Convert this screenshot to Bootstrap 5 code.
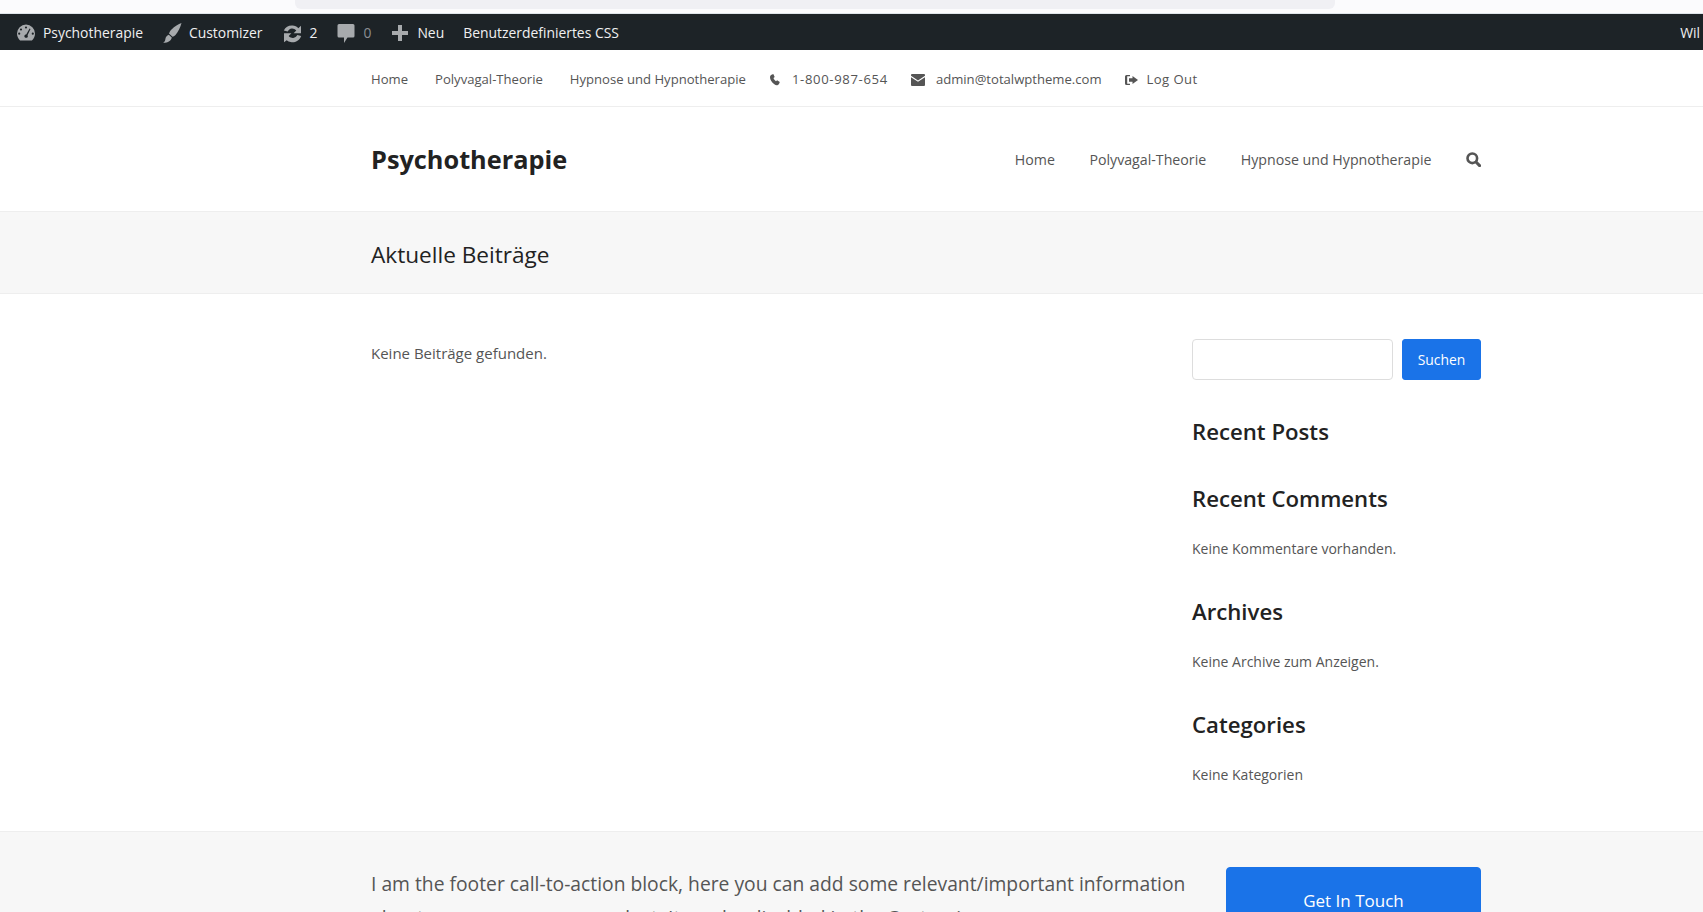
<!DOCTYPE html>
<html lang="de">
<head>
  <meta charset="UTF-8">
  <meta name="viewport" content="width=device-width, initial-scale=1">
  <title>Psychotherapie</title>
  <link href="https://cdn.jsdelivr.net/npm/bootstrap@5.3.3/dist/css/bootstrap.min.css" rel="stylesheet">
  <style>
    body {
      font-family: "Open Sans", "Noto Sans", sans-serif;
      color: #555;
      font-size: 15px;
      overflow: hidden;
      height: 912px;
    }
    a { color: inherit; text-decoration: none; }

    .browser-strip { height: 14px; background: #fbfbfd; border-bottom: 1px solid #dfe5ea; }
    .browser-tab { width: 1040px; height: 9px; margin-left: 295px; background: #f0f0f4; border-radius: 0 0 6px 6px; }

    .wp-bar { height: 36px; background: #1d2327; color: #f0f0f1; font-size: 13.9px; white-space: nowrap; padding-top: 2px; }
    .wp-bar svg { fill: #a7aaad; display: block; }
    .wp-item { display: flex; align-items: center; gap: 7px; margin-left: 19px; }
    .wp-item:first-child { margin-left: 16px; }
    .wp-zero { color: #8c8f94; }
    .wp-user { margin-right: 3px; }

    .top-nav { height: 57px; border-bottom: 1px solid #eee; font-size: 13.1px; padding-top: 4px; }
    .site-box { width: 1110px; margin-left: 371px; }
    .top-nav svg { fill: #555; display: block; }
    .top-link { margin-left: 27px; }
    .top-info { display: flex; align-items: center; gap: 11px; margin-left: 23px; }
    .top-phone { letter-spacing: .65px; }
    .top-logout { letter-spacing: .4px; gap: 9px; }

    .site-head { height: 105px; border-bottom: 1px solid #eee; padding-top: 2px; }
    .site-name { font-size: 25.3px; font-weight: 700; color: #222; }
    .main-menu { font-size: 14.2px; gap: 34.5px; }

    .page-head { height: 82px; background: #f7f7f7; border-bottom: 1px solid #eee; padding-top: 5px; }
    .page-head h1 { font-size: 22.6px; font-weight: 400; color: #222; margin: 0; }

    .page-body { height: 537px; padding-top: 45px; }
    .side-col { width: 289px; }
    .side-col h4 { font-size: 22.2px; line-height: 32px; font-weight: 600; color: #222; margin: 36px 0 0; }
    .side-col h4.side-tight { margin-top: 35px; }
    .side-form { gap: 9px; }
    .side-search { height: 41px; border-radius: 4px; border: 1px solid #ddd; }
    .btn-suchen { background: #1a73e8; border-color: #1a73e8; color: #fff; height: 41px; font-size: 13.9px; width: 79px; padding: 2px 0 0; border-radius: 3px; }
    .side-text { font-size: 14px; line-height: 22px; margin-top: 23px; }
    .main-text { font-size: 15px; margin-top: 3px; }

    .foot-cta { background: #f7f7f7; border-top: 1px solid #eee; padding-top: 35px; height: 200px; }
    .foot-cta p { font-size: 19.3px; line-height: 34px; margin: 0; width: 840px; }
    .btn-touch { background: #1a73e8; border-color: #1a73e8; color: #fff; width: 255px; height: 68px; font-size: 17px; border-radius: 4px; }
  </style>
</head>
<body>

<div class="browser-strip"><div class="browser-tab"></div></div>

<!-- admin bar -->
<div class="wp-bar d-flex align-items-center justify-content-between">
  <div class="d-flex align-items-center">
    <span class="wp-item">
      <svg width="20" height="20" viewBox="0 0 20 20"><path d="M10 1.500a9 9 0 0 0-9 9c0 2.700 1.200 5.200 3.100 6.900h11.800A9 9 0 0 0 19 10.500a9 9 0 0 0-9-9zM10 3.400a1.100 1.100 0 1 1 0 2.200 1.100 1.100 0 0 1 0-2.200zM5 5.400a1.100 1.100 0 1 1 0 2.200 1.100 1.100 0 0 1 0-2.200zM3.200 9.600a1.100 1.100 0 1 1 0 2.200 1.100 1.100 0 0 1 0-2.200zM16.800 9.600a1.100 1.100 0 1 1 0 2.200 1.100 1.100 0 0 1 0-2.200zM13.600 5.500l.9.500-3 6.300c.5.600.5 1.500-.1 2.100-.7.700-2 .6-2.700-.2-.6-.8-.4-2 .5-2.500.3-.2.7-.3 1-.2z" fill-rule="evenodd"/></svg>
      Psychotherapie
    </span>
    <span class="wp-item">
      <svg width="20" height="22" viewBox="0 0 20 22"><path d="M19.500 1c-1 4-3.500 9-6 12-1 1-2 1.500-3 1.800L7 11.500c.5-1.500 1.500-3 2.500-4C12.500 4.500 16.500 2 19.500 1zM6.800 12.700l3 2.900c-.4 3-3.500 5.400-8.800 5.400 1.700-1.200 2-2.300 2.300-3.600.3-2.200 1.500-4.200 3.500-4.700z"/></svg>
      Customizer
    </span>
    <span class="wp-item">
      <svg width="21" height="20" viewBox="0 0 21 20"><path d="M10.500 2.500c2.300 0 4.400 1 5.800 2.700L19 2.800v7.400h-7.400l2.700-2.700a5 5 0 0 0-8.600.9L1.800 7.500A9.200 9.200 0 0 1 10.500 2.500zM2 10.300h7.400l-2.700 2.700a5 5 0 0 0 8.600-.9l3.900.9a9.200 9.200 0 0 1-14.500 4.200L2 19.200z"/></svg>
      2
    </span>
    <span class="wp-item">
      <svg width="20" height="22" viewBox="0 0 20 22"><path d="M3 2h14a1.500 1.500 0 0 1 1.500 1.500v10.500a1.500 1.500 0 0 1-1.500 1.500h-5.500L8 21v-5.500H3A1.500 1.500 0 0 1 1.500 14V3.500A1.500 1.500 0 0 1 3 2z"/></svg>
      <span class="wp-zero">0</span>
    </span>
    <span class="wp-item">
      <svg width="20" height="20" viewBox="0 0 20 20"><path d="M8 2h4v6h6v4h-6v6H8v-6H2V8h6z"/></svg>
      Neu
    </span>
    <span class="wp-item">Benutzerdefiniertes CSS</span>
  </div>
  <span class="wp-user">Wil</span>
</div>

<!-- top menu -->
<div class="top-nav d-flex align-items-center">
  <div class="site-box d-flex align-items-center">
    <a href="#">Home</a>
    <a href="#" class="top-link">Polyvagal-Theorie</a>
    <a href="#" class="top-link">Hypnose und Hypnotherapie</a>
    <span class="top-info top-phone">
      <svg width="12" height="12" viewBox="0 0 12 12"><path d="M2.500.7 4.300 0l1.400 3-1.200 1c.3 1.200 1.300 2.500 2.500 3.200l1.100-1 2.700 1.800-.7 1.700C9 11.500 7.300 11.800 5 10 2.600 8.200 1 5.500 1 3.200c0-1 .5-1.900 1.500-2.500z"/></svg>
      1-800-987-654
    </span>
    <span class="top-info">
      <svg width="14" height="12" viewBox="0 0 14 12"><path d="M1 0h12a1 1 0 0 1 1 1v.8L7 6.400 0 1.800V1a1 1 0 0 1 1-1zM0 3.300l7 4.500 7-4.500V11a1 1 0 0 1-1 1H1a1 1 0 0 1-1-1z"/></svg>
      admin@totalwptheme.com
    </span>
    <span class="top-info top-logout">
      <svg width="13" height="12" viewBox="0 0 13 12"><path d="M1.500 1H5v1.200H2.200v7.600H5V11H1.500A1.500 1.500 0 0 1 0 9.500v-7A1.500 1.500 0 0 1 1.500 1zM7.500 2 13 6l-5.500 4V7.800H4V4.200h3.500z"/></svg>
      Log Out
    </span>
  </div>
</div>

<!-- header -->
<div class="site-head d-flex align-items-center">
  <div class="site-box d-flex align-items-center justify-content-between">
    <a href="#" class="site-name">Psychotherapie</a>
    <div class="main-menu d-flex align-items-center">
      <a href="#">Home</a>
      <a href="#">Polyvagal-Theorie</a>
      <a href="#">Hypnose und Hypnotherapie</a>
      <svg width="15" height="15" viewBox="0 0 15 15" fill="none" stroke="#555" stroke-width="2.600"><circle cx="6.300" cy="6.300" r="4.800"/><path d="M10 10 13.600 13.600" stroke-linecap="round" stroke-width="3"/></svg>
    </div>
  </div>
</div>

<div class="page-head d-flex align-items-center">
  <div class="site-box"><h1>Aktuelle Beiträge</h1></div>
</div>

<div class="page-body">
  <div class="site-box d-flex justify-content-between">
    <p class="main-text">Keine Beiträge gefunden.</p>
    <div class="side-col">
      <form class="side-form d-flex" onsubmit="return false">
        <input type="text" class="form-control side-search" aria-label="Suchen">
        <button class="btn btn-suchen flex-shrink-0">Suchen</button>
      </form>
      <h4>Recent Posts</h4>
      <h4 class="side-tight">Recent Comments</h4>
      <div class="side-text">Keine Kommentare vorhanden.</div>
      <h4>Archives</h4>
      <div class="side-text">Keine Archive zum Anzeigen.</div>
      <h4>Categories</h4>
      <div class="side-text">Keine Kategorien</div>
    </div>
  </div>
</div>

<div class="foot-cta">
  <div class="site-box d-flex justify-content-between align-items-start">
    <p>I am the footer call-to-action block, here you can add some relevant/important information about your company or product. It can be disabled in the Customizer.</p>
    <a href="#" class="btn btn-touch d-flex align-items-center justify-content-center">Get In Touch</a>
  </div>
</div>

<script src="https://cdn.jsdelivr.net/npm/bootstrap@5.3.3/dist/js/bootstrap.bundle.min.js"></script>
</body>
</html>
